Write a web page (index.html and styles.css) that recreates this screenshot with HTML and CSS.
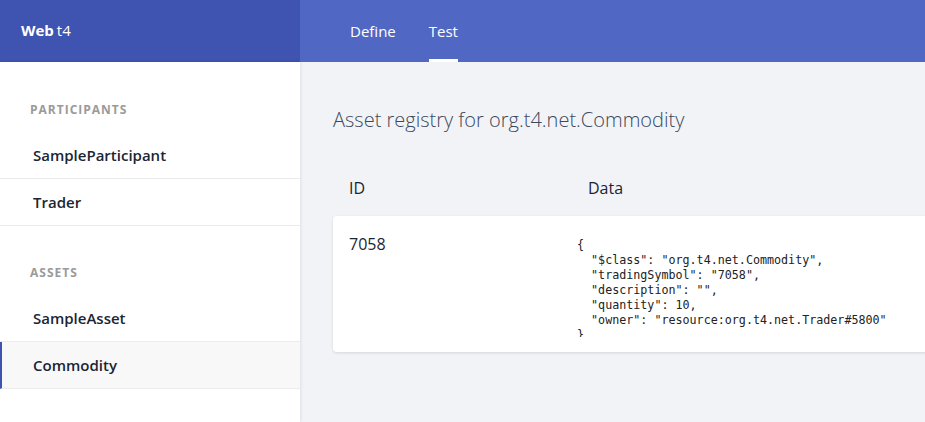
FILE: index.html
```html
<!DOCTYPE html>
<html>
<head>
<meta charset="utf-8">
<link rel="stylesheet" href="styles.css">
</head>
<body>
<div class="app">
  <header class="topbar">
    <div class="brand"><b>Web</b> t4</div>
    <nav class="tabs">
      <a class="tab">Define</a>
      <a class="tab active">Test</a>
    </nav>
  </header>
  <div class="body">
    <aside class="sidebar">
      <div class="section-title">PARTICIPANTS</div>
      <ul class="list">
        <li class="item">SampleParticipant</li>
        <li class="item">Trader</li>
      </ul>
      <div class="section-title assets">ASSETS</div>
      <ul class="list second">
        <li class="item">SampleAsset</li>
        <li class="item selected">Commodity</li>
      </ul>
    </aside>
    <main class="main">
      <h1 class="title">Asset registry for org.t4.net.Commodity</h1>
      <div class="thead">
        <div class="col-id">ID</div>
        <div class="col-data">Data</div>
      </div>
      <div class="card">
        <div class="col-id">7058</div>
        <div class="col-data"><pre class="json">{
  "$class": "org.t4.net.Commodity",
  "tradingSymbol": "7058",
  "description": "",
  "quantity": 10,
  "owner": "resource:org.t4.net.Trader#5800"
}</pre></div>
      </div>
    </main>
  </div>
</div>
</body>
</html>
```
FILE: styles.css
```css
* { box-sizing: border-box; }
html, body { margin: 0; padding: 0; }
body {
  font-family: "Open Sans", "Noto Sans", sans-serif;
  width: 925px;
  height: 422px;
  overflow: hidden;
  background: #f2f3f7;
}
.app { display: flex; flex-direction: column; height: 422px; }
.topbar {
  display: flex;
  height: 62px;
  background: #5068c4;
  color: #fff;
  flex-shrink: 0;
}
.brand {
  width: 300px;
  background: #3f53b0;
  padding-left: 21px;
  display: flex;
  align-items: center;
  font-size: 15px;
  padding-bottom: 2px;
}
.brand b { font-weight: 700; margin-right: 3px; }
.tabs {
  display: flex;
  padding-left: 50px;
  gap: 33px;
}
.tab {
  display: flex;
  align-items: center;
  font-size: 15px;
  color: #fff;
  border-bottom: 3px solid transparent;
  padding-top: 3px;
}
.tab.active { border-bottom-color: #fff; }
.body { display: flex; flex: 1; }
.sidebar {
  width: 300px;
  background: #fff;
  box-shadow: 1px 0 3px rgba(0,0,0,0.08);
  padding-top: 37px;
  position: relative;
  z-index: 1;
}
.section-title {
  font-size: 12px;
  font-weight: 700;
  letter-spacing: 1px;
  color: #9a9a9a;
  padding-left: 30px;
  height: 22px;
  line-height: 22px;
}
.section-title.assets { margin-top: 36px; }
.list { list-style: none; margin: 11px 0 0; padding: 0; }
.list.second { margin-top: 11px; }
.item {
  height: 47px;
  line-height: 46px;
  padding-left: 33px;
  font-size: 15px;
  font-weight: 600;
  color: #1b2533;
  border-bottom: 1px solid #ececec;
}
.item.selected {
  background: #f8f8f9;
  border-left: 2px solid #3f53b0;
  padding-left: 31px;
}
.main { flex: 1; padding-left: 33px; padding-top: 44px; overflow: hidden; }
.title {
  margin: 0;
  font-size: 20px;
  font-weight: 300;
  color: #3b4a5c;
  line-height: 28px;
}
.thead {
  display: flex;
  margin-top: 38px;
  font-size: 16px;
  color: #1b2533;
  height: 32px;
  align-items: center;
}
.col-id { width: 239px; padding-left: 16px; flex-shrink: 0; }
.thead .col-id { width: 255px; }
.card {
  display: flex;
  margin-top: 12px;
  width: 620px;
  height: 136px;
  background: #fff;
  border-radius: 4px;
  box-shadow: 0 1px 3px rgba(0,0,0,0.12);
  padding-top: 17px;
  font-size: 16px;
  color: #1b2533;
}
.card .col-id { line-height: 22px; }
.card .col-data { padding-left: 5px; padding-top: 5px; }
.json {
  margin: 0;
  font-family: "DejaVu Sans Mono", monospace;
  font-size: 11.7px;
  line-height: 15px;
  color: #222;
  height: 99px;
  overflow: hidden;
}
```
